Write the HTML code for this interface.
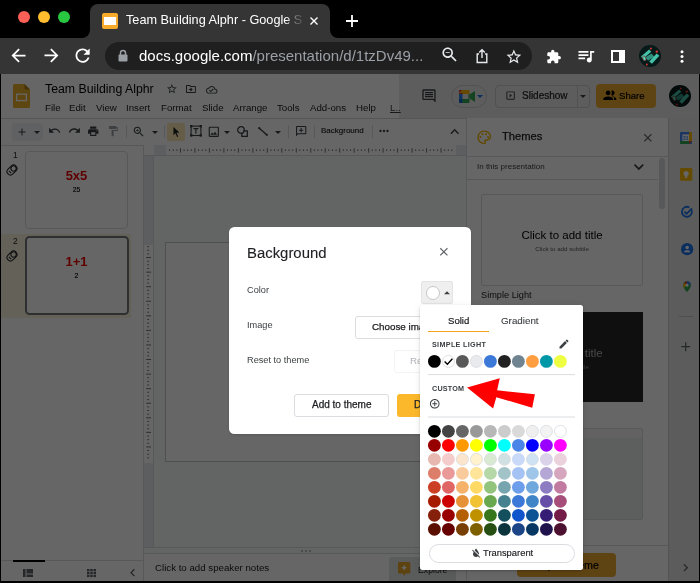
<!DOCTYPE html>
<html><head><meta charset="utf-8">
<style>
*{margin:0;padding:0;box-sizing:border-box}
html,body{width:700px;height:583px;overflow:hidden;background:#000;font-family:"Liberation Sans",sans-serif}
.a{position:absolute}
svg.a{overflow:visible}
.t{position:absolute;white-space:nowrap;line-height:1;will-change:transform}
/* chrome */
#tab{left:90px;top:4px;width:240px;height:34px;background:#353535;border-radius:8px 8px 0 0}
#tb{left:0;top:38px;width:700px;height:36px;background:#353535}
#addr{left:105px;top:42px;width:427px;height:28px;background:#1f1f1f;border-radius:14px}
.tl{width:12px;height:12px;border-radius:50%;top:11px}
/* app */
#app{left:1px;top:74px;width:698px;height:507px;background:#fff;overflow:hidden}
#ov{left:0;top:74px;width:700px;height:509px;background:rgba(0,0,0,.6)}
.menu{font-size:9.7px;color:#202124;top:103px}
.sep{width:1px;background:#dadce0}
.ic{fill:none;stroke:#444746;stroke-width:1.5}
</style></head><body>
<!-- ============ browser chrome ============ -->
<div class="a tl" style="left:18px;background:#fe5f57"></div>
<div class="a tl" style="left:38px;background:#febc2e"></div>
<div class="a tl" style="left:58px;background:#28c840"></div>
<div class="a" id="tab"></div>
<div class="a" id="tb"></div>
<!-- concave tab feet -->
<svg class="a" style="left:82px;top:30px" width="8" height="8"><path d="M0 8 A8 8 0 0 0 8 0 L8 8 Z" fill="#353535"/></svg>
<svg class="a" style="left:330px;top:30px" width="8" height="8"><path d="M8 8 A8 8 0 0 1 0 0 L0 8 Z" fill="#353535"/></svg>
<!-- tab icon -->
<div class="a" style="left:102px;top:13px;width:16px;height:16px;background:#f7ab2a;border-radius:2px"></div>
<div class="a" style="left:104px;top:16.8px;width:12.3px;height:8.2px;background:#fff"></div>
<div class="t" style="left:126px;top:14.3px;font-size:12.7px;color:#fff;width:176px;overflow:hidden;-webkit-mask-image:linear-gradient(90deg,#000 160px,rgba(0,0,0,.3) 170px,rgba(0,0,0,.15) 176px)">Team Building Alphr - Google Slides</div>
<svg class="a" style="left:310px;top:17px" width="8" height="8"><path d="M0.5 0.5L7.5 7.5M7.5 0.5L0.5 7.5" stroke="#fff" stroke-width="1.4"/></svg>
<svg class="a" style="left:346px;top:15px" width="12" height="12"><path d="M6 0V12M0 6H12" stroke="#fff" stroke-width="1.8"/></svg>
<!-- nav -->
<svg class="a" style="left:8.15px;top:45.45px" width="21.00" height="21.00" viewBox="0 0 24 24"><path d="M20 11H7.83l5.59-5.59L12 4l-8 8 8 8 1.41-1.41L7.83 13H20v-2z" fill="#fff"/></svg>
<svg class="a" style="left:40.64px;top:45.49px" width="20.92" height="20.92" viewBox="0 0 24 24"><path d="M12 4l-1.41 1.41L16.17 11H4v2h12.17l-5.58 5.59L12 20l8-8z" fill="#fff"/></svg>
<svg class="a" style="left:72.29px;top:45.44px" width="21.22" height="21.22" viewBox="0 0 24 24"><path d="M17.65 6.35C16.2 4.9 14.21 4 12 4c-4.42 0-7.99 3.58-7.99 8s3.57 8 7.99 8c3.73 0 6.84-2.55 7.73-6h-2.08c-.82 2.33-3.04 4-5.65 4-3.31 0-6-2.69-6-6s2.69-6 6-6c1.66 0 3.14.69 4.22 1.78L13 11h7V4l-2.35 2.35z" fill="#fff"/></svg>
<div class="a" id="addr"></div>
<!-- lock -->
<svg class="a" style="left:118px;top:49px" width="10" height="13"><path d="M2.5 6V4A2.5 2.5 0 0 1 7.5 4V6" fill="none" stroke="#9aa0a6" stroke-width="1.5"/><rect x="0.5" y="5.5" width="9" height="7" rx="1" fill="#9aa0a6"/></svg>
<div class="t" style="left:139px;top:48px;font-size:15px;color:#fff">docs.google.com<span style="color:#9aa0a6">/presentation/d/1tzDv49...</span></div>
<!-- right address icons -->
<svg class="a" style="left:439.97px;top:45.27px" width="19.47" height="19.47" viewBox="0 0 24 24"><path d="M15.5 14h-.79l-.28-.27C15.41 12.59 16 11.11 16 9.5 16 5.91 13.09 3 9.5 3S3 5.91 3 9.5 5.91 16 9.5 16c1.61 0 3.09-.59 4.23-1.57l.27.28v.79l5 4.99L20.49 19l-4.99-5zm-6 0C7.01 14 5 11.99 5 9.5S7.01 5 9.5 5 14 7.01 14 9.5 11.99 14 9.5 14zM7 9h5v1H7z" fill="#e8eaed"/></svg>
<svg class="a" style="left:475px;top:48px" width="14" height="16"><path d="M4 6H2.2V14.5H11.8V6H10" fill="none" stroke="#e8eaed" stroke-width="1.4"/><path d="M7 10V2M4.2 4.6L7 1.8L9.8 4.6" fill="none" stroke="#e8eaed" stroke-width="1.4"/></svg>
<svg class="a" style="left:505.04px;top:47.81px" width="17.72" height="17.72" viewBox="0 0 24 24"><path d="M22 9.24l-7.19-.62L12 2 9.19 8.63 2 9.24l5.46 4.73L5.82 21 12 17.27 18.18 21l-1.63-7.03L22 9.24zM12 15.4l-3.76 2.27 1-4.28-3.32-2.88 4.38-.38L12 6.1l1.71 4.04 4.38.38-3.32 2.88 1 4.28L12 15.4z" fill="#e8eaed"/></svg>
<!-- extensions -->
<svg class="a" style="left:545.80px;top:48.85px" width="15.54" height="15.54" viewBox="0 0 24 24"><path d="M20.5 11H19V7c0-1.1-.9-2-2-2h-4V3.5C13 2.12 11.88 1 10.5 1S8 2.12 8 3.5V5H4c-1.1 0-1.99.9-1.99 2v3.8H3.5c1.49 0 2.7 1.21 2.7 2.7s-1.21 2.7-2.7 2.7H2V20c0 1.1.9 2 2 2h3.8v-1.5c0-1.49 1.21-2.7 2.7-2.7 1.49 0 2.7 1.21 2.7 2.7V22H17c1.1 0 2-.9 2-2v-4h1.5c1.380 0 2.5-1.12 2.5-2.5S21.88 11 20.5 11z" fill="#fff"/></svg>
<svg class="a" style="left:575.65px;top:45.93px" width="19.88" height="19.88" viewBox="0 0 24 24"><path d="M15 6H3v2h12V6zm0 4H3v2h12v-2zM3 16h8v-2H3v2zM17 6v8.18c-.31-.11-.65-.18-1-.18-1.66 0-3 1.34-3 3s1.34 3 3 3 3-1.34 3-3V8h3V6h-5z" fill="#fff"/></svg>
<div class="a" style="left:611px;top:50px;width:14px;height:13px;background:#fff"></div>
<div class="a" style="left:613px;top:52px;width:6px;height:9px;background:#353535"></div>
<div class="a" style="left:639.1px;top:44.8px;width:22.2px;height:22.2px;border-radius:50%;background:#071a1a;overflow:hidden"><svg width="22" height="22" viewBox="0 0 22 22"><path d="M6 12.5L12.5 8.5L15.5 12L9 15.5Z" fill="#2f8f7c"/><path d="M3 12.6L11.2 5.6" stroke="#45c2a8" stroke-width="3.2"/><path d="M11.6 17.6L19 9.6" stroke="#45c2a8" stroke-width="3.6"/><ellipse cx="5.3" cy="13.4" rx="1.5" ry="2.5" transform="rotate(-20 5.3 13.4)" fill="#55d6bb" stroke="#8a2020" stroke-width="0.6"/><circle cx="11.9" cy="3.6" r="1" fill="#e03030"/><circle cx="17.8" cy="6.6" r="1.2" fill="#e03030"/><circle cx="7.8" cy="19.6" r="1" fill="#e03030"/></svg></div>
<svg class="a" style="left:680px;top:50px" width="4" height="13"><circle cx="2" cy="1.8" r="1.5" fill="#fff"/><circle cx="2" cy="6.5" r="1.5" fill="#fff"/><circle cx="2" cy="11.2" r="1.5" fill="#fff"/></svg>

<!-- ============ app (underlying) ============ -->
<div class="a" id="app"></div>
<div id="APP"></div>
<div class="a" style="left:399px;top:74px;width:300px;height:44px;background:#e8e8e8"></div>
<div class="a" style="left:1px;top:117.5px;width:698px;height:1px;background:#d4d4d4"></div>
<!-- header -->
<svg class="a" style="left:13px;top:84px" width="17" height="24"><path d="M1.5 0H11.5L17 5.5V22.5A1.5 1.5 0 0 1 15.5 24H1.5A1.5 1.5 0 0 1 0 22.5V1.5A1.5 1.5 0 0 1 1.5 0Z" fill="#eaae2c"/><path d="M11.5 0L17 5.5H12.5A1 1 0 0 1 11.5 4.5Z" fill="#b47f14"/><rect x="3.6" y="10.2" width="9.8" height="6.4" fill="none" stroke="#fff" stroke-width="1.3"/></svg>
<div class="t" id="title" style="left:45px;top:83px;font-size:12.3px;color:#000">Team Building Alphr</div>
<svg class="a" style="left:165.72px;top:83.02px" width="11.75" height="11.75" viewBox="0 0 24 24"><path d="M22 9.24l-7.19-.62L12 2 9.19 8.63 2 9.24l5.46 4.73L5.82 21 12 17.27 18.18 21l-1.63-7.03L22 9.24zM12 15.4l-3.76 2.27 1-4.28-3.32-2.88 4.38-.38L12 6.1l1.71 4.04 4.38.38-3.32 2.88 1 4.28L12 15.4z" fill="#3c4043"/></svg>
<svg class="a" style="left:185.16px;top:82.76px" width="11.88" height="11.88" viewBox="0 0 24 24"><path d="M20 6h-8l-2-2H4c-1.1 0-1.99.9-1.99 2L2 18c0 1.1.9 2 2 2h16c1.1 0 2-.9 2-2V8c0-1.1-.9-2-2-2zm0 12H4V6h5.17l2 2H20v10zm-8.16-6H8v2h3.84l-1.59 1.59L11.66 17 15.66 13l-4-4-1.41 1.41z" fill="#3c4043"/></svg>
<svg class="a" style="left:205.85px;top:83.65px" width="11.50" height="11.50" viewBox="0 0 24 24"><path d="M19.35 10.04C18.67 6.59 15.64 4 12 4 9.11 4 6.6 5.64 5.35 8.04 2.34 8.36 0 10.91 0 14c0 3.310 2.69 6 6 6h13c2.76 0 5-2.24 5-5 0-2.64-2.05-4.78-4.65-4.96zM19 18H6c-2.21 0-4-1.79-4-4 0-2.05 1.53-3.76 3.56-3.97l1.07-.11.5-.95C8.08 7.14 9.94 6 12 6c2.62 0 4.88 1.86 5.39 4.43l.3 1.5 1.53.11c1.56.1 2.78 1.41 2.78 2.96 0 1.65-1.35 3-3 3zm-9-3.82l-2.09-2.09L6.5 13.5 10 17l6.01-6.01-1.41-1.41z" fill="#3c4043"/></svg>
<div class="t menu" style="left:45px">File</div>
<div class="t menu" style="left:69px">Edit</div>
<div class="t menu" style="left:95.5px">View</div>
<div class="t menu" style="left:126px">Insert</div>
<div class="t menu" style="left:161px">Format</div>
<div class="t menu" style="left:202px">Slide</div>
<div class="t menu" style="left:233px">Arrange</div>
<div class="t menu" style="left:276.5px">Tools</div>
<div class="t menu" style="left:310px">Add-ons</div>
<div class="t menu" style="left:356px">Help</div>
<div class="t menu" style="left:389.5px;color:#3c4043;text-decoration:underline">L..</div>
<!-- comment icon -->
<svg class="a" style="left:420.97px;top:87.87px" width="15.96" height="15.96" viewBox="0 0 24 24"><path d="M21.99 4c0-1.1-.89-2-1.99-2H4c-1.1 0-2 .9-2 2v12c0 1.1.9 2 2 2h14l4 4-.01-18zM20 4v13.17L18.83 16H4V4h16zM6 12h12v2H6zm0-3h12v2H6zm0-3h12v2H6z" fill="#3c4043"/></svg>
<!-- meet -->
<div class="a" style="left:451px;top:84.5px;width:36px;height:23px;border:1px solid #c8cacd;border-radius:12px"></div>
<svg class="a" style="left:459px;top:90px" width="16" height="13"><path d="M0 3L3 0H9.5V4H3.5V9H9.5V13H1A1 1 0 0 1 0 12Z" fill="#1e88e5"/><path d="M0 3H3.5V4H0Z" fill="#ea4335"/><path d="M3 0H9.5A1 1 0 0 1 10.5 1V4.6L9.5 4H3.5V3H0Z" fill="#fbbc04"/><path d="M0 9H3.5V13H1A1 1 0 0 1 0 12Z" fill="#1565c0"/><path d="M3.5 9H9.5V8L10.5 7V12A1 1 0 0 1 9.5 13H3.5Z" fill="#34a853"/><path d="M9.5 4H10.5V7L9.5 8Z" fill="#188038"/><path d="M10.5 4.6L16 1V12L10.5 8.4Z" fill="#34a853"/><path d="M0 3L3.5 3V4H0" fill="#ea4335"/><path d="M0 0L3 0L0 3Z" fill="#ea4335"/></svg>
<svg class="a" style="left:477px;top:94.5px" width="6" height="4"><path d="M0 0H6L3 3Z" fill="#1a73e8"/></svg>
<!-- slideshow -->
<div class="a" style="left:495px;top:84.5px;width:94.5px;height:23px;border:1px solid #c8cacd;border-radius:4px"></div>
<div class="a sep" style="left:576.5px;top:85px;height:22px;background:#c8cacd"></div>
<svg class="a" style="left:504.60px;top:89.80px" width="11.20" height="11.20" viewBox="0 0 24 24"><path d="M10 8v8l5-4-5-4zm9-5H5c-1.1 0-2 .9-2 2v14c0 1.1.9 2 2 2h14c1.1 0 2-.9 2-2V5c0-1.1-.9-2-2-2zm0 16H5V5h14v14z" fill="#3c4043"/></svg>
<div class="t" id="ss" style="left:522px;top:91px;font-size:10px;color:#202124;-webkit-text-stroke:0.2px #202124">Slideshow</div>
<svg class="a" style="left:580px;top:94.5px" width="6" height="4"><path d="M0 0H6L3 3Z" fill="#3c4043"/></svg>
<!-- share -->
<div class="a" style="left:596px;top:84px;width:60px;height:24px;background:#eeab30;border-radius:4px"></div>
<svg class="a" style="left:601.66px;top:87.07px" width="16.35" height="16.35" viewBox="0 0 24 24"><path d="M9 12c1.93 0 3.5-1.57 3.5-3.5S10.93 5 9 5 5.5 6.57 5.5 8.5 7.07 12 9 12zm0 2c-2.34 0-7 1.17-7 3.5V19h14v-1.5c0-2.33-4.66-3.5-7-3.5zm6.08-1.94c1.35.58 2.42 1.64 2.42 3.44V19h3.5v-1.5c0-2.04-3.5-3.2-5.92-3.44zM15 12c1.93 0 3.5-1.57 3.5-3.5S16.93 5 15 5c-.54 0-1.04.13-1.5.35.63.89 1 1.98 1 3.15s-.37 2.26-1 3.15c.46.22.96.35 1.5.35z" fill="#000"/></svg>
<div class="t" id="share" style="left:618.5px;top:91px;font-size:9.6px;color:#000;-webkit-text-stroke:0.2px #000">Share</div>
<!-- avatar -->
<div class="a" style="left:669px;top:85.3px;width:22px;height:22px;border-radius:50%;background:#071a1a;overflow:hidden"><svg width="22" height="22" viewBox="0 0 22 22"><path d="M6 12.5L12.5 8.5L15.5 12L9 15.5Z" fill="#2f8f7c"/><path d="M3 12.6L11.2 5.6" stroke="#45c2a8" stroke-width="3.2"/><path d="M11.6 17.6L19 9.6" stroke="#45c2a8" stroke-width="3.6"/><ellipse cx="5.3" cy="13.4" rx="1.5" ry="2.5" transform="rotate(-20 5.3 13.4)" fill="#55d6bb" stroke="#8a2020" stroke-width="0.6"/><circle cx="11.9" cy="3.6" r="1" fill="#e03030"/><circle cx="17.8" cy="6.6" r="1.2" fill="#e03030"/><circle cx="7.8" cy="19.6" r="1" fill="#e03030"/></svg></div>

<!-- toolbar -->
<div class="a" style="left:1px;top:144.5px;width:698px;height:1px;background:#dadce0"></div>
<div class="a" style="left:12px;top:123px;width:31px;height:17.5px;background:#f1f3f4;border-radius:3px"></div>
<svg class="a" style="left:16.10px;top:125.70px" width="12.00" height="12.00" viewBox="0 0 24 24"><path d="M19 13h-6v6h-2v-6H5v-2h6V5h2v6h6v2z" fill="#3c4043"/></svg>
<svg class="a" style="left:34px;top:130.5px" width="6" height="4"><path d="M0 0H6L3 3Z" fill="#3c4043"/></svg>
<svg class="a" style="left:48.06px;top:124.15px" width="13.25" height="13.25" viewBox="0 0 24 24"><path d="M12.5 8c-2.65 0-5.05.99-6.9 2.6L2 7v9h9l-3.62-3.62c1.39-1.16 3.16-1.88 5.12-1.88 3.54 0 6.55 2.31 7.6 5.5l2.37-.78C21.08 11.03 17.150 8 12.5 8z" fill="#3c4043"/></svg>
<svg class="a" style="left:67.84px;top:124.28px" width="12.99" height="12.99" viewBox="0 0 24 24"><path d="M18.4 10.6C16.55 8.99 14.15 8 11.5 8c-4.65 0-8.58 3.03-9.96 7.22L3.9 16c1.05-3.19 4.05-5.5 7.6-5.5 1.95 0 3.73.72 5.12 1.88L13 16h9V7l-3.6 3.6z" fill="#3c4043"/></svg>
<svg class="a" style="left:87.31px;top:125.11px" width="12.47" height="12.47" viewBox="0 0 24 24"><path d="M19 8H5c-1.66 0-3 1.34-3 3v6h4v4h12v-4h4v-6c0-1.66-1.34-3-3-3zm-3 11H8v-5h8v5zm3-7c-.55 0-1-.45-1-1s.45-1 1-1 1 .45 1 1-.45 1-1 1zm-1-9H6v4h12V3z" fill="#3c4043"/></svg>
<svg class="a" style="left:106.74px;top:125.39px" width="12.21" height="12.21" viewBox="0 0 24 24"><path d="M18 4V3c0-.55-.45-1-1-1H5c-.55 0-1 .45-1 1v4c0 .55.45 1 1 1h12c.55 0 1-.45 1-1V6h1v4H9v11c0 .55.45 1 1 1h2c.55 0 1-.45 1-1v-9h8V4h-3z" fill="#9aa0a6"/></svg>
<div class="a sep" style="left:125.5px;top:125px;height:13px"></div>
<svg class="a" style="left:132.24px;top:124.99px" width="13.51" height="13.51" viewBox="0 0 24 24"><path d="M15.5 14h-.79l-.28-.27C15.41 12.59 16 11.11 16 9.5 16 5.91 13.09 3 9.5 3S3 5.91 3 9.5 5.91 16 9.5 16c1.61 0 3.09-.59 4.23-1.57l.27.28v.79l5 4.99L20.49 19l-4.99-5zm-6 0C7.01 14 5 11.99 5 9.5S7.01 5 9.5 5 14 7.01 14 9.5 11.99 14 9.5 14zm2.5-4h-2v2H9v-2H7V9h2V7h1v2h2v1z" fill="#3c4043"/></svg>
<svg class="a" style="left:151.5px;top:130.5px" width="6" height="4"><path d="M0 0H6L3 3Z" fill="#3c4043"/></svg>
<div class="a sep" style="left:163.5px;top:125px;height:13px"></div>
<div class="a" style="left:167px;top:123px;width:18px;height:17.5px;background:#fce8b2;border-radius:2px"></div>
<svg class="a" style="left:169.80px;top:125.55px" width="11.90" height="11.90" viewBox="0 0 24 24"><path d="M7 2l12 11.2-5.8.5 3.3 7.3-2.2 1-3.2-7.4L7 18.5z" fill="#202124"/></svg>
<svg class="a" style="left:190px;top:125.2px" width="12" height="11.6"><rect x="1.1" y="1.1" width="9.8" height="9.4" fill="none" stroke="#3c4043" stroke-width="1.1"/><g fill="#3c4043"><rect x="0" y="0" width="2.4" height="2.4"/><rect x="9.6" y="0" width="2.4" height="2.4"/><rect x="0" y="9.2" width="2.4" height="2.4"/><rect x="9.6" y="9.2" width="2.4" height="2.4"/></g><path d="M3.4 3.6H8.4M5.9 3.6V8.4" stroke="#3c4043" stroke-width="1.2"/></svg>
<svg class="a" style="left:207.42px;top:125.07px" width="13.67" height="13.67" viewBox="0 0 24 24"><path d="M19 5v14H5V5h14m0-2H5c-1.1 0-2 .9-2 2v14c0 1.1.9 2 2 2h14c1.1 0 2-.9 2-2V5c0-1.1-.9-2-2-2zm-4.86 8.86l-3 3.87L9 13.14 6 17h12l-3.86-5.14z" fill="#3c4043"/></svg>
<svg class="a" style="left:223.5px;top:130.5px" width="6" height="4"><path d="M0 0H6L3 3Z" fill="#3c4043"/></svg>
<svg class="a" style="left:236.5px;top:125.5px" width="11" height="11"><circle cx="4" cy="4" r="3.3" fill="none" stroke="#3c4043" stroke-width="1.3"/><path d="M6.2 4.8H10.3V10.3H4.8V6.8" fill="none" stroke="#3c4043" stroke-width="1.3"/></svg>
<svg class="a" style="left:258px;top:127px" width="10" height="9"><path d="M1 1L9 8" stroke="#3c4043" stroke-width="1.4"/><circle cx="1.2" cy="1.2" r="1.1" fill="#3c4043"/><circle cx="8.8" cy="7.8" r="1.1" fill="#3c4043"/></svg>
<svg class="a" style="left:275px;top:130.5px" width="6" height="4"><path d="M0 0H6L3 3Z" fill="#3c4043"/></svg>
<div class="a sep" style="left:287.5px;top:125px;height:13px"></div>
<svg class="a" style="left:294.97px;top:125.47px" width="12.36" height="12.36" viewBox="0 0 24 24"><path transform="translate(24 0) scale(-1 1)" d="M22 4c0-1.1-.9-2-2-2H4c-1.1 0-2 .9-2 2v12c0 1.1.9 2 2 2h14l4 4V4zm-2 0v13.17L18.83 16H4V4h16zM13 6h-2v3H8v2h3v3h2v-3h3V9h-3z" fill="#3c4043"/></svg>
<div class="a sep" style="left:313.5px;top:125px;height:13px"></div>
<div class="t" id="bgt" style="left:321px;top:127px;font-size:8px;color:#202124;-webkit-text-stroke:0.15px #202124">Background</div>
<div class="a sep" style="left:371.5px;top:125px;height:13px"></div>
<svg class="a" style="left:377.02px;top:124.42px" width="13.95" height="13.95" viewBox="0 0 24 24"><path d="M6 10c-1.1 0-2 .9-2 2s.9 2 2 2 2-.9 2-2-.9-2-2-2zm12 0c-1.1 0-2 .9-2 2s.9 2 2 2 2-.9 2-2-.9-2-2-2zm-6 0c-1.1 0-2 .9-2 2s.9 2 2 2 2-.9 2-2-.9-2-2-2z" fill="#3c4043"/></svg>
<svg class="a" style="left:445.54px;top:122.76px" width="17.42" height="17.42" viewBox="0 0 24 24"><path d="M12 8l-6 6 1.41 1.41L12 10.83l4.59 4.58L18 14z" fill="#3c4043"/></svg>



<!-- filmstrip -->
<div class="a" style="left:143px;top:145px;width:1px;height:436px;background:#dadce0"></div>
<div class="t" style="left:13px;top:151px;font-size:8.5px;color:#202124">1</div>
<svg class="a" style="left:6px;top:164px" width="12" height="12"><g transform="rotate(-45 6 6)" fill="none" stroke="#202124" stroke-width="1"><rect x="0.4" y="2.6" width="11.2" height="6.8" rx="3.4"/><circle cx="8.2" cy="6" r="2.6"/><path d="M3.2 4.4V7.6"/></g></svg>
<div class="a" style="left:25px;top:150.5px;width:103px;height:78px;border:1px solid #dadce0;border-radius:4px;background:#fff"></div>
<div class="t" style="left:25px;width:103px;text-align:center;top:168.5px;font-size:13px;font-weight:bold;color:#e00">5x5</div>
<div class="t" style="left:25px;width:103px;text-align:center;top:186.5px;font-size:6.8px;color:#000;-webkit-text-stroke:0.15px #000">25</div>
<div class="a" style="left:1px;top:233.5px;width:130px;height:84px;background:#fbf3df"></div>
<div class="t" style="left:13px;top:237px;font-size:8.5px;color:#202124">2</div>
<svg class="a" style="left:6px;top:250px" width="12" height="12"><g transform="rotate(-45 6 6)" fill="none" stroke="#202124" stroke-width="1"><rect x="0.4" y="2.6" width="11.2" height="6.8" rx="3.4"/><circle cx="8.2" cy="6" r="2.6"/><path d="M3.2 4.4V7.6"/></g></svg>
<div class="a" style="left:24.5px;top:236px;width:104.5px;height:79px;border:2px solid #70757a;border-radius:4.5px;background:#fff"></div>
<div class="t" style="left:25px;width:103px;text-align:center;top:254.5px;font-size:13px;font-weight:bold;color:#e00">1+1</div>
<div class="t" style="left:25px;width:103px;text-align:center;top:272.5px;font-size:6.8px;color:#000;-webkit-text-stroke:0.15px #000">2</div>
<!-- filmstrip bottom -->
<div class="a" style="left:1px;top:560px;width:142px;height:1px;background:#dadce0"></div>
<div class="a" style="left:13px;top:559.5px;width:32px;height:2px;background:#000"></div>
<svg class="a" style="left:23px;top:569px" width="10" height="8"><rect x="0" y="0" width="2.5" height="8" fill="#5f6368"/><rect x="3.5" y="0" width="6.5" height="4.5" fill="#5f6368"/><rect x="3.5" y="5.5" width="6.5" height="2.5" fill="#5f6368"/></svg>
<svg class="a" style="left:87px;top:569px" width="9" height="8"><g fill="#5f6368"><rect x="0" y="0" width="2.5" height="2.3"/><rect x="3.25" y="0" width="2.5" height="2.3"/><rect x="6.5" y="0" width="2.5" height="2.3"/><rect x="0" y="2.9" width="2.5" height="2.3"/><rect x="3.25" y="2.9" width="2.5" height="2.3"/><rect x="6.5" y="2.9" width="2.5" height="2.3"/><rect x="0" y="5.8" width="2.5" height="2.3"/><rect x="3.25" y="5.8" width="2.5" height="2.3"/><rect x="6.5" y="5.8" width="2.5" height="2.3"/></g></svg>
<svg class="a" style="left:124.59px;top:565.15px" width="15.30" height="15.30" viewBox="0 0 24 24"><path d="M15.41 7.41L14 6l-6 6 6 6 1.41-1.41L10.83 12z" fill="#5f6368"/></svg>

<!-- canvas -->
<div class="a" style="left:144px;top:145px;width:322px;height:402px;background:#f8f9fa"></div>
<!-- vertical ruler -->
<div class="a" style="left:144px;top:155px;width:9.5px;height:392px;background:#e8eaed"></div>
<div class="a" style="left:144px;top:244.5px;width:9.5px;height:218px;background:#fff"></div>
<div class="a" style="left:153px;top:155px;width:1px;height:392px;background:#dadce0"></div>
<svg class="a" style="left:144px;top:243px" width="10" height="219"><path d="M3.3 3.64H5.1M3.3 7.28H5.1M3.3 10.93H5.1M2.2 14.57H7M3.3 18.21H5.1M3.3 21.85H5.1M3.3 25.49H5.1M2.2 29.13H7M3.3 32.77H5.1M3.3 36.42H5.1M3.3 40.06H5.1M2.2 43.70H7M3.3 47.34H5.1M3.3 50.98H5.1M3.3 54.62H5.1M2.2 58.27H7M3.3 61.91H5.1M3.3 65.55H5.1M3.3 69.19H5.1M2.2 72.83H7M3.3 76.47H5.1M3.3 80.12H5.1M3.3 83.76H5.1M2.2 87.40H7M3.3 91.04H5.1M3.3 94.68H5.1M3.3 98.33H5.1M2.2 101.97H7M3.3 105.61H5.1M3.3 109.25H5.1M3.3 112.89H5.1M2.2 116.53H7M3.3 120.17H5.1M3.3 123.82H5.1M3.3 127.46H5.1M2.2 131.10H7M3.3 134.74H5.1M3.3 138.38H5.1M3.3 142.03H5.1M2.2 145.67H7M3.3 149.31H5.1M3.3 152.95H5.1M3.3 156.59H5.1M2.2 160.23H7M3.3 163.88H5.1M3.3 167.52H5.1M3.3 171.16H5.1M2.2 174.80H7M3.3 178.44H5.1M3.3 182.08H5.1M3.3 185.72H5.1M2.2 189.37H7M3.3 193.01H5.1M3.3 196.65H5.1M3.3 200.29H5.1M2.2 203.93H7M3.3 207.57H5.1M3.3 211.22H5.1M3.3 214.86H5.1" stroke="#5f6368" stroke-width="0.9"/></svg>
<!-- horizontal ruler -->
<div class="a" style="left:144px;top:145px;width:322px;height:10px;background:#fff"></div>
<div class="a" style="left:153.5px;top:145px;width:12.5px;height:10px;background:#e8eaed"></div>
<div class="a" style="left:455.5px;top:145px;width:11px;height:10px;background:#e8eaed"></div>
<div class="a" style="left:144px;top:154.5px;width:322px;height:1px;background:#dadce0"></div>
<svg class="a" style="left:166px;top:145px" width="290" height="10"><path d="M3.62 4.4V6M7.24 4.4V6M10.86 4.4V6M14.47 3.2V7.6M18.09 4.4V6M21.71 4.4V6M25.33 4.4V6M28.95 3.2V7.6M32.57 4.4V6M36.19 4.4V6M39.81 4.4V6M43.42 3.2V7.6M47.04 4.4V6M50.66 4.4V6M54.28 4.4V6M57.90 3.2V7.6M61.52 4.4V6M65.14 4.4V6M68.76 4.4V6M72.38 3.2V7.6M75.99 4.4V6M79.61 4.4V6M83.23 4.4V6M86.85 3.2V7.6M90.47 4.4V6M94.09 4.4V6M97.71 4.4V6M101.33 3.2V7.6M104.94 4.4V6M108.56 4.4V6M112.18 4.4V6M115.80 3.2V7.6M119.42 4.4V6M123.04 4.4V6M126.66 4.4V6M130.28 3.2V7.6M133.89 4.4V6M137.51 4.4V6M141.13 4.4V6M144.75 3.2V7.6M148.37 4.4V6M151.99 4.4V6M155.61 4.4V6M159.22 3.2V7.6M162.84 4.4V6M166.46 4.4V6M170.08 4.4V6M173.70 3.2V7.6M177.32 4.4V6M180.94 4.4V6M184.56 4.4V6M188.17 3.2V7.6M191.79 4.4V6M195.41 4.4V6M199.03 4.4V6M202.65 3.2V7.6M206.27 4.4V6M209.89 4.4V6M213.51 4.4V6M217.12 3.2V7.6M220.74 4.4V6M224.36 4.4V6M227.98 4.4V6M231.60 3.2V7.6M235.22 4.4V6M238.84 4.4V6M242.46 4.4V6M246.07 3.2V7.6M249.69 4.4V6M253.31 4.4V6M256.93 4.4V6M260.55 3.2V7.6M264.17 4.4V6M267.79 4.4V6M271.41 4.4V6M275.02 3.2V7.6M278.64 4.4V6M282.26 4.4V6M285.88 4.4V6" stroke="#5f6368" stroke-width="0.9"/></svg>
<!-- slide -->
<div class="a" style="left:165px;top:242px;width:291px;height:220px;background:#fff;border:1px solid #c4c7c5"></div>
<!-- notes -->
<div class="a" style="left:144px;top:547px;width:322px;height:7px;background:#f8f9fa;border-top:1px solid #dadce0;border-bottom:1px solid #dadce0"></div>
<svg class="a" style="left:301px;top:549.5px" width="10" height="2"><circle cx="1" cy="1" r="0.9" fill="#9aa0a6"/><circle cx="5" cy="1" r="0.9" fill="#9aa0a6"/><circle cx="9" cy="1" r="0.9" fill="#9aa0a6"/></svg>
<div class="t" id="notes" style="left:155px;top:563px;font-size:9.7px;color:#202124">Click to add speaker notes</div>
<div class="a" style="left:389px;top:556.5px;width:66.5px;height:24.5px;background:#e2e3e4;border-radius:3px 3px 0 0"></div>
<svg class="a" style="left:397.8px;top:562px" width="12.3" height="13.7" viewBox="0 0 12.3 13.7"><path d="M0 1A1 1 0 0 1 1 0H11.3A1 1 0 0 1 12.3 1V10.5A1 1 0 0 1 11.3 11.5H7.6L6.15 13.7L4.7 11.5H1A1 1 0 0 1 0 10.5Z" fill="#e8a82a"/><path d="M6.15 2.8Q6.6 5.3 9 5.75Q6.6 6.2 6.15 8.7Q5.7 6.2 3.3 5.75Q5.7 5.3 6.15 2.8Z" fill="#fff"/></svg>
<div class="t" style="left:417.5px;top:565.5px;font-size:8.7px;color:#202124">Explore</div>

<!-- themes panel -->
<div class="a" style="left:466px;top:118px;width:1px;height:463px;background:#dadce0"></div>
<div class="a" style="left:467px;top:118px;width:201px;height:463px;background:#fff"></div>
<svg class="a" style="left:476.12px;top:128.62px" width="16.56" height="16.56" viewBox="0 0 24 24"><path d="M12 22C6.49 22 2 17.51 2 12S6.49 2 12 2s10 4.04 10 9c0 3.31-2.69 6-6 6h-1.77c-.28 0-.5.22-.5.5 0 .12.05.23.13.33.41.47.64 1.06.64 1.67 0 1.38-1.12 2.5-2.5 2.5zm0-18c-4.41 0-8 3.59-8 8s3.59 8 8 8c.28 0 .5-.22.5-.5 0-.16-.08-.28-.14-.35-.41-.46-.63-1.05-.63-1.65 0-1.38 1.12-2.5 2.5-2.5H16c2.21 0 4-1.79 4-4 0-3.86-3.590-7-8-7z" fill="#f4b400"/><circle cx="6.5" cy="11.5" r="1.5" fill="#f4b400"/><circle cx="9.5" cy="7.5" r="1.5" fill="#f4b400"/><circle cx="14.5" cy="7.5" r="1.5" fill="#f4b400"/><circle cx="17.5" cy="11.5" r="1.5" fill="#f4b400"/></svg>
<div class="t" id="themes" style="left:501.5px;top:130.5px;font-size:11.2px;color:#202124;-webkit-text-stroke:0.25px #202124">Themes</div>
<svg class="a" style="left:641.14px;top:130.64px" width="13.71" height="13.71" viewBox="0 0 24 24"><path d="M19 6.41L17.59 5 12 10.59 6.41 5 5 6.41 10.59 12 5 17.59 6.41 19 12 13.41 17.59 19 19 17.59 13.41 12z" fill="#5f6368"/></svg>
<div class="a" style="left:467px;top:155.5px;width:201px;height:1px;background:#dadce0"></div>
<div class="t" id="inthis" style="left:476.5px;top:162.8px;font-size:8px;color:#3c4043">In this presentation</div>
<svg class="a" style="left:629.14px;top:157.39px" width="19.73" height="19.73" viewBox="0 0 24 24"><path d="M16.59 8.59L12 13.17 7.41 8.59 6 10l6 6 6-6z" fill="#3c4043"/></svg>
<div class="a" style="left:467px;top:178.5px;width:191px;height:1px;background:#dadce0"></div>
<div class="a" style="left:659px;top:157.5px;width:6px;height:51px;background:#dadce0;border-radius:3px"></div>
<div class="a" style="left:481px;top:193.5px;width:162px;height:92px;border:1px solid #dadce0;border-radius:2px;background:#fff"></div>
<div class="t" id="cat" style="left:481px;width:162px;text-align:center;top:230px;font-size:11.5px;color:#000">Click to add title</div>
<div class="t" id="cas" style="left:481px;width:162px;text-align:center;top:246px;font-size:6.2px;color:#595959">Click to add subtitle</div>
<div class="t" id="sl" style="left:481px;top:291px;font-size:9.2px;color:#202124">Simple Light</div>
<div class="a" style="left:481px;top:312px;width:161.5px;height:90px;background:#262626"></div>
<div class="t" style="left:481px;width:162px;text-align:center;top:347.5px;font-size:11.5px;color:#b7b7b7">Click to add title</div>
<div class="t" style="left:481px;width:162px;text-align:center;top:363.5px;font-size:6.2px;color:#8a8a8a">Click to add subtitle</div>
<div class="a" style="left:481px;top:428px;width:162px;height:92px;border:1px solid #dadce0;border-radius:2px;background:#e9ecec;overflow:hidden"><div style="height:9px;background:#f5f6f6"></div></div>
<div class="a" style="left:467px;top:545px;width:201px;height:1px;background:#dadce0"></div>
<div class="a" style="left:517px;top:553px;width:99px;height:23.5px;background:#eeab30;border-radius:4px"></div>
<div class="t" style="left:536px;top:560px;font-size:10.7px;color:#000;-webkit-text-stroke:0.2px #000">Import theme</div>

<!-- right sidebar -->
<div class="a" style="left:667.5px;top:118px;width:31px;height:463px;background:#e6e7e8;border-left:1px solid #d0d0d0"></div>
<svg class="a" style="left:680.3px;top:131.5px" width="12" height="12"><rect x="0" y="0" width="12" height="12" rx="1" fill="#4285f4"/><path d="M9 0H11A1 1 0 0 1 12 1V9H9Z" fill="#fbbc04"/><path d="M0 9H9V12H1A1 1 0 0 1 0 11Z" fill="#34a853"/><path d="M9 9H12L9 12Z" fill="#ea4335"/><rect x="2.4" y="2.4" width="6.6" height="6.6" fill="#fff"/><text x="5.7" y="8.2" font-size="5" text-anchor="middle" fill="#4285f4" font-family="Liberation Sans" font-weight="bold">31</text></svg>
<svg class="a" style="left:680.3px;top:168px" width="12.3" height="12.7"><rect x="0" y="0" width="12.3" height="12.7" rx="1.2" fill="#fbbc04"/><circle cx="6.15" cy="5.6" r="2.6" fill="#fff"/><rect x="4.9" y="8.2" width="2.5" height="1.8" fill="#fff"/></svg>
<svg class="a" style="left:681px;top:205.5px" width="12" height="12"><path d="M10.4 3.6A5 5 0 1 1 8.3 1.4" fill="none" stroke="#1a73e8" stroke-width="1.8"/><path d="M3.4 5.6L5.6 7.8L11 2.4" fill="none" stroke="#1a73e8" stroke-width="1.8"/></svg>
<svg class="a" style="left:680.5px;top:243px" width="12.3" height="12.3"><circle cx="6.15" cy="6.15" r="6.15" fill="#1a73e8"/><circle cx="6.15" cy="4.5" r="1.8" fill="#fff"/><path d="M2.9 9.2C3.3 7.9 4.6 7.3 6.15 7.3S9 7.9 9.4 9.2Z" fill="#fff"/></svg>
<svg class="a" style="left:682.8px;top:280.7px" width="8" height="11.3" viewBox="0 0 12 16"><path d="M6 0A5.8 5.8 0 0 1 11.8 5.8C11.8 10 6 16 6 16S0.2 10 0.2 5.8A5.8 5.8 0 0 1 6 0Z" fill="#34a853"/><path d="M6 0A5.8 5.8 0 0 1 11.8 5.8L2 2Z" fill="#4285f4"/><path d="M0.2 5.8A5.8 5.8 0 0 1 2 2L6 6L1.5 9.5Z" fill="#fbbc04"/><path d="M2 2A5.8 5.8 0 0 1 6 0L6 6Z" fill="#ea4335"/><circle cx="6" cy="5.8" r="2.2" fill="#fff"/></svg>
<div class="a" style="left:679px;top:316px;width:14px;height:1px;background:#c4c7c5"></div>
<svg class="a" style="left:678.29px;top:338.79px" width="15.43" height="15.43" viewBox="0 0 24 24"><path d="M19 13h-6v6h-2v-6H5v-2h6V5h2v6h6v2z" fill="#5f6368"/></svg>
<svg class="a" style="left:677.71px;top:559.65px" width="15.30" height="15.30" viewBox="0 0 24 24"><path d="M10 6L8.59 7.41 13.17 12l-4.58 4.59L10 18l6-6z" fill="#5f6368"/></svg>
<div class="a" style="left:698.5px;top:74px;width:1.5px;height:509px;background:#000"></div>
<div class="a" style="left:0;top:581px;width:700px;height:2px;background:#000"></div>

<div class="a" id="ov"></div>
<div id="TOP"></div>
<!-- dialog -->
<div class="a" style="left:229px;top:227px;width:242px;height:207px;background:#fff;border-radius:5.5px;box-shadow:0 1px 3px rgba(0,0,0,.15)"></div>
<div class="t" id="bg" style="left:246.5px;top:246px;font-size:14.9px;color:#202124;-webkit-text-stroke:0.1px #202124">Background</div>
<svg class="a" style="left:436.94px;top:245.14px" width="13.71" height="13.71" viewBox="0 0 24 24"><path d="M19 6.41L17.59 5 12 10.59 6.41 5 5 6.41 10.59 12 5 17.59 6.41 19 12 13.41 17.59 19 19 17.59 13.41 12z" fill="#5f6368"/></svg>
<div class="t" id="lcolor" style="left:246.5px;top:286px;font-size:9.2px;color:#3c4043">Color</div>
<div class="t" style="left:246.5px;top:321px;font-size:9.2px;color:#3c4043">Image</div>
<div class="t" style="left:246.5px;top:356px;font-size:9.2px;color:#3c4043">Reset to theme</div>
<div class="a" style="left:420.8px;top:280.6px;width:32px;height:23.5px;background:#efefef;border:1px solid #e4e4e4;border-radius:2px"></div>
<div class="a" style="left:425.5px;top:285.5px;width:14px;height:14px;border-radius:50%;background:#fff;border:1px solid #c4c7c5"></div>
<svg class="a" style="left:443.5px;top:291px" width="6" height="4"><path d="M0 3.2H6L3 0.2Z" fill="#3c4043"/></svg>
<div class="a" style="left:354.5px;top:315.5px;width:120px;height:23px;border:1px solid #dadce0;border-radius:3px;background:#fff"></div>
<div class="t" style="left:372px;top:321.5px;font-size:9.8px;color:#202124;-webkit-text-stroke:0.25px #202124">Choose image</div>
<div class="a" style="left:394px;top:349.5px;width:80px;height:23px;border:1px solid #f1f3f4;border-radius:3px;background:#fff"></div>
<div class="t" style="left:410px;top:355.5px;font-size:9.8px;color:#b0b3b8">Reset</div>
<div class="a" style="left:293.5px;top:393.5px;width:95.5px;height:23px;border:1px solid #dadce0;border-radius:3px;background:#fff"></div>
<div class="t" id="att" style="left:293.5px;width:95.5px;text-align:center;top:399.5px;font-size:10px;color:#202124;-webkit-text-stroke:0.25px #202124">Add to theme</div>
<div class="a" style="left:397px;top:393.5px;width:60px;height:23px;border-radius:3px;background:#fbb82b"></div>
<div class="t" style="left:413.5px;top:400.3px;font-size:10px;color:#202124;-webkit-text-stroke:0.25px #202124">Done</div>

<!-- color dropdown -->
<div class="a" style="left:420px;top:305px;width:162.5px;height:264.5px;background:#fff;border-radius:2.5px;box-shadow:0 1px 2px rgba(0,0,0,.2),0 1px 6px rgba(0,0,0,.1)"></div>
<div class="t" id="solid" style="left:448px;top:316px;font-size:9.6px;color:#202124;-webkit-text-stroke:0.2px #202124">Solid</div>
<div class="t" id="grad" style="left:500.5px;top:316px;font-size:9.8px;color:#3c4043;-webkit-text-stroke:0.1px #3c4043">Gradient</div>
<div class="a" style="left:428px;top:330.5px;width:61px;height:1.5px;background:#f6a21b"></div>
<div class="t" id="simple" style="left:431.5px;top:341px;font-size:7.2px;font-weight:bold;letter-spacing:0.33px;color:#3c4043">SIMPLE LIGHT</div>
<svg class="a" style="left:558.00px;top:337.50px" width="12.00" height="12.00" viewBox="0 0 24 24"><path d="M3 17.25V21h3.75L17.81 9.94l-3.75-3.75L3 17.25zM20.71 7.04c.39-.39.39-1.02 0-1.41l-2.34-2.34c-.39-.39-1.02-.39-1.41 0l-1.83 1.83 3.75 3.75 1.83-1.83z" fill="#3c4043"/></svg>
<svg class="a" style="left:420px;top:305px" width="163" height="265"><circle cx="14.4" cy="56.4" r="6.4" fill="#000000"/><circle cx="28.4" cy="56.4" r="6" fill="#ffffff" stroke="#dadce0" stroke-width="0.9"/><circle cx="42.4" cy="56.4" r="6.4" fill="#595959"/><circle cx="56.4" cy="56.4" r="6" fill="#e8eaed" stroke="#dadce0" stroke-width="0.9"/><circle cx="70.4" cy="56.4" r="6.4" fill="#3c78d8"/><circle cx="84.4" cy="56.4" r="6.4" fill="#212121"/><circle cx="98.4" cy="56.4" r="6.4" fill="#6f8390"/><circle cx="112.4" cy="56.4" r="6.4" fill="#ff9e40"/><circle cx="126.4" cy="56.4" r="6.4" fill="#0097a7"/><circle cx="140.4" cy="56.4" r="6.4" fill="#eeff41"/><path d="M24.6 56.4L27.4 59.2L32.4 53.8" fill="none" stroke="#000" stroke-width="1.4"/>
<path d="M8 69.6H155M8 112H155" stroke="#dadce0" stroke-width="1"/><circle cx="14.4" cy="126.3" r="6.4" fill="#000000"/><circle cx="28.4" cy="126.3" r="6.4" fill="#434343"/><circle cx="42.4" cy="126.3" r="6.4" fill="#666666"/><circle cx="56.4" cy="126.3" r="6.4" fill="#999999"/><circle cx="70.4" cy="126.3" r="6.4" fill="#b7b7b7"/><circle cx="84.4" cy="126.3" r="6.4" fill="#cccccc"/><circle cx="98.4" cy="126.3" r="6.4" fill="#d9d9d9"/><circle cx="112.4" cy="126.3" r="6" fill="#efefef" stroke="#dadce0" stroke-width="0.9"/><circle cx="126.4" cy="126.3" r="6" fill="#f3f3f3" stroke="#dadce0" stroke-width="0.9"/><circle cx="140.4" cy="126.3" r="6" fill="#ffffff" stroke="#dadce0" stroke-width="0.9"/><circle cx="14.4" cy="140.3" r="6.4" fill="#980000"/><circle cx="28.4" cy="140.3" r="6.4" fill="#ff0000"/><circle cx="42.4" cy="140.3" r="6.4" fill="#ff9900"/><circle cx="56.4" cy="140.3" r="6.4" fill="#ffff00"/><circle cx="70.4" cy="140.3" r="6.4" fill="#00ff00"/><circle cx="84.4" cy="140.3" r="6.4" fill="#00ffff"/><circle cx="98.4" cy="140.3" r="6.4" fill="#4a86e8"/><circle cx="112.4" cy="140.3" r="6.4" fill="#0000ff"/><circle cx="126.4" cy="140.3" r="6.4" fill="#9900ff"/><circle cx="140.4" cy="140.3" r="6.4" fill="#ff00ff"/><circle cx="14.4" cy="154.3" r="6.4" fill="#e6b8af"/><circle cx="28.4" cy="154.3" r="6.4" fill="#f4cccc"/><circle cx="42.4" cy="154.3" r="6" fill="#fce5cd" stroke="#dadce0" stroke-width="0.9"/><circle cx="56.4" cy="154.3" r="6" fill="#fff2cc" stroke="#dadce0" stroke-width="0.9"/><circle cx="70.4" cy="154.3" r="6" fill="#d9ead3" stroke="#dadce0" stroke-width="0.9"/><circle cx="84.4" cy="154.3" r="6" fill="#d0e0e3" stroke="#dadce0" stroke-width="0.9"/><circle cx="98.4" cy="154.3" r="6.4" fill="#c9daf8"/><circle cx="112.4" cy="154.3" r="6" fill="#cfe2f3" stroke="#dadce0" stroke-width="0.9"/><circle cx="126.4" cy="154.3" r="6.4" fill="#d9d2e9"/><circle cx="140.4" cy="154.3" r="6.4" fill="#ead1dc"/><circle cx="14.4" cy="168.3" r="6.4" fill="#dd7e6b"/><circle cx="28.4" cy="168.3" r="6.4" fill="#ea9999"/><circle cx="42.4" cy="168.3" r="6.4" fill="#f9cb9c"/><circle cx="56.4" cy="168.3" r="6.4" fill="#ffe599"/><circle cx="70.4" cy="168.3" r="6.4" fill="#b6d7a8"/><circle cx="84.4" cy="168.3" r="6.4" fill="#a2c4c9"/><circle cx="98.4" cy="168.3" r="6.4" fill="#a4c2f4"/><circle cx="112.4" cy="168.3" r="6.4" fill="#9fc5e8"/><circle cx="126.4" cy="168.3" r="6.4" fill="#b4a7d6"/><circle cx="140.4" cy="168.3" r="6.4" fill="#d5a6bd"/><circle cx="14.4" cy="182.3" r="6.4" fill="#cc4125"/><circle cx="28.4" cy="182.3" r="6.4" fill="#e06666"/><circle cx="42.4" cy="182.3" r="6.4" fill="#f6b26b"/><circle cx="56.4" cy="182.3" r="6.4" fill="#ffd966"/><circle cx="70.4" cy="182.3" r="6.4" fill="#93c47d"/><circle cx="84.4" cy="182.3" r="6.4" fill="#76a5af"/><circle cx="98.4" cy="182.3" r="6.4" fill="#6d9eeb"/><circle cx="112.4" cy="182.3" r="6.4" fill="#6fa8dc"/><circle cx="126.4" cy="182.3" r="6.4" fill="#8e7cc3"/><circle cx="140.4" cy="182.3" r="6.4" fill="#c27ba0"/><circle cx="14.4" cy="196.3" r="6.4" fill="#a61c00"/><circle cx="28.4" cy="196.3" r="6.4" fill="#cc0000"/><circle cx="42.4" cy="196.3" r="6.4" fill="#e69138"/><circle cx="56.4" cy="196.3" r="6.4" fill="#f1c232"/><circle cx="70.4" cy="196.3" r="6.4" fill="#6aa84f"/><circle cx="84.4" cy="196.3" r="6.4" fill="#45818e"/><circle cx="98.4" cy="196.3" r="6.4" fill="#3c78d8"/><circle cx="112.4" cy="196.3" r="6.4" fill="#3d85c6"/><circle cx="126.4" cy="196.3" r="6.4" fill="#674ea7"/><circle cx="140.4" cy="196.3" r="6.4" fill="#a64d79"/><circle cx="14.4" cy="210.3" r="6.4" fill="#85200c"/><circle cx="28.4" cy="210.3" r="6.4" fill="#990000"/><circle cx="42.4" cy="210.3" r="6.4" fill="#b45f06"/><circle cx="56.4" cy="210.3" r="6.4" fill="#bf9000"/><circle cx="70.4" cy="210.3" r="6.4" fill="#38761d"/><circle cx="84.4" cy="210.3" r="6.4" fill="#134f5c"/><circle cx="98.4" cy="210.3" r="6.4" fill="#1155cc"/><circle cx="112.4" cy="210.3" r="6.4" fill="#0b5394"/><circle cx="126.4" cy="210.3" r="6.4" fill="#351c75"/><circle cx="140.4" cy="210.3" r="6.4" fill="#741b47"/><circle cx="14.4" cy="224.3" r="6.4" fill="#5b0f00"/><circle cx="28.4" cy="224.3" r="6.4" fill="#660000"/><circle cx="42.4" cy="224.3" r="6.4" fill="#783f04"/><circle cx="56.4" cy="224.3" r="6.4" fill="#7f6000"/><circle cx="70.4" cy="224.3" r="6.4" fill="#274e13"/><circle cx="84.4" cy="224.3" r="6.4" fill="#0c343d"/><circle cx="98.4" cy="224.3" r="6.4" fill="#1c4587"/><circle cx="112.4" cy="224.3" r="6.4" fill="#073763"/><circle cx="126.4" cy="224.3" r="6.4" fill="#20124d"/><circle cx="140.4" cy="224.3" r="6.4" fill="#4c1130"/></svg>
<div class="t" id="custom" style="left:431.5px;top:385px;font-size:7.2px;font-weight:bold;letter-spacing:0.2px;color:#3c4043">CUSTOM</div>
<svg class="a" style="left:429.24px;top:398.04px" width="11.52" height="11.52" viewBox="0 0 24 24"><path d="M13 7h-2v4H7v2h4v4h2v-4h4v-2h-4V7zm-1-5C6.48 2 2 6.48 2 12s4.48 10 10 10 10-4.48 10-10S17.52 2 12 2zm0 18c-4.41 0-8-3.59-8-8s3.59-8 8-8 8 3.59 8 8-3.59 8-8 8z" fill="#3c4043"/></svg>
<div class="a" style="left:428.5px;top:543.5px;width:146px;height:19px;border:1px solid #dadce0;border-radius:10px"></div>
<svg class="a" style="left:470.49px;top:546.88px" width="12.09" height="12.09" viewBox="0 0 24 24"><path d="M18 14c0-4-6-10.8-6-10.8s-1.33 1.51-2.73 3.52l8.59 8.59c.09-.42.14-.86.14-1.31zm-.88 3.12L12.5 12.5 5.27 5.27 4 6.55l3.32 3.32C6.55 11.32 6 12.79 6 14c0 3.31 2.69 6 6 6 1.52 0 2.9-.57 3.95-1.5l2.63 2.63L19.85 19.85l-2.73-2.73z" fill="#3c4043"/></svg>
<div class="t" id="transp" style="left:483px;top:548px;font-size:9.4px;color:#202124;-webkit-text-stroke:0.15px #202124">Transparent</div>
<!-- red arrow -->
<svg class="a" style="left:0;top:0" width="700" height="583"><path d="M467.1 387.4L499.8 378.2L497.1 390.3L534.9 394.3L532.2 407.7L496.3 397.2L493.1 408.6Z" fill="#ff0000"/></svg>

</body></html>
